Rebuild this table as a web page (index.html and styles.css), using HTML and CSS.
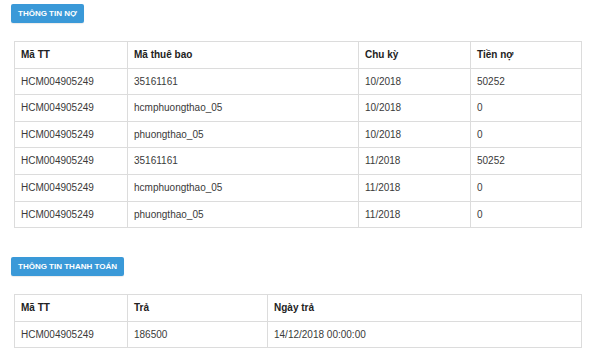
FILE: index.html
```html
<!DOCTYPE html>
<html lang="vi">
<head>
<meta charset="utf-8">
<title>Thông tin nợ</title>
<link rel="stylesheet" href="styles.css">
</head>
<body>
<div class="page">
  <section class="block">
    <div class="btn">THÔNG TIN NỢ</div>
    <table class="grid">
      <colgroup><col class="c1"><col class="c2"><col class="c3"><col class="c4"></colgroup>
      <thead><tr><th>Mã TT</th><th>Mã thuê bao</th><th>Chu kỳ</th><th>Tiền nợ</th></tr></thead>
      <tbody>
        <tr><td>HCM004905249</td><td>35161161</td><td>10/2018</td><td>50252</td></tr>
        <tr><td>HCM004905249</td><td>hcmphuongthao_05</td><td>10/2018</td><td>0</td></tr>
        <tr><td>HCM004905249</td><td>phuongthao_05</td><td>10/2018</td><td>0</td></tr>
        <tr><td>HCM004905249</td><td>35161161</td><td>11/2018</td><td>50252</td></tr>
        <tr><td>HCM004905249</td><td>hcmphuongthao_05</td><td>11/2018</td><td>0</td></tr>
        <tr><td>HCM004905249</td><td>phuongthao_05</td><td>11/2018</td><td>0</td></tr>
      </tbody>
    </table>
  </section>
  <section class="block second">
    <div class="btn">THÔNG TIN THANH TOÁN</div>
    <table class="grid">
      <colgroup><col class="c1"><col class="d2"><col class="d3"></colgroup>
      <thead><tr><th>Mã TT</th><th>Trả</th><th>Ngày trả</th></tr></thead>
      <tbody>
        <tr><td>HCM004905249</td><td>186500</td><td>14/12/2018 00:00:00</td></tr>
      </tbody>
    </table>
  </section>
</div>
</body>
</html>
```
FILE: styles.css
```css
html, body {
  margin: 0;
  padding: 0;
  background: #ffffff;
}
body {
  font-family: "Liberation Sans", Arial, sans-serif;
  font-size: 10px;
  color: #3a3a3a;
}
.page {
  padding: 4px 9px 0 11px;
}
.block {
  display: flex;
  flex-direction: column;
  align-items: flex-start;
}
.second {
  margin-top: 29px;
}
.btn {
  background: #3a99d8;
  color: #ffffff;
  font-weight: bold;
  font-size: 8px;
  line-height: 19px;
  height: 19px;
  padding: 0 7px;
  border-radius: 2px;
  box-shadow: 0 1px 1px rgba(0,0,0,0.08);
}
.grid {
  margin: 18px 0 0 3px;
  width: 567px;
  border-collapse: collapse;
  table-layout: fixed;
  border: 1px solid #dcdcdc;
}
.grid th, .grid td {
  border: 1px solid #dcdcdc;
  padding: 5px 6px;
  line-height: 15.6px;
  text-align: left;
  vertical-align: middle;
  white-space: nowrap;
}
.grid th {
  font-weight: bold;
  color: #222222;
}
.c1 { width: 113px; }
.c2 { width: 231px; }
.c3 { width: 112px; }
.c4 { width: 111px; }
.d2 { width: 140px; }
.d3 { width: 314px; }
```
